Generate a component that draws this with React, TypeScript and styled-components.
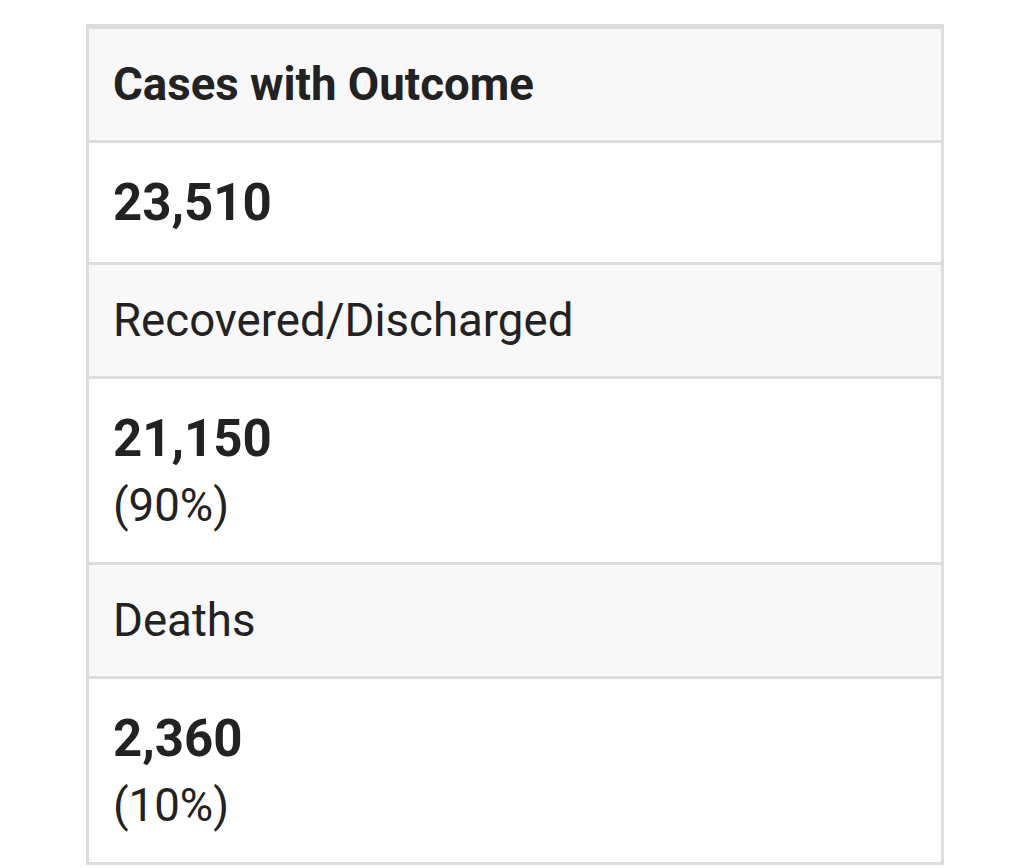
import React from "react";
import styled, { createGlobalStyle } from "styled-components";

const GlobalStyle = createGlobalStyle`
  html, body {
    margin: 0;
    padding: 0;
    background: #ffffff;
  }
  body {
    font-family: Roboto, "Noto Sans", "Liberation Sans", sans-serif;
    color: #222222;
  }
`;

const Page = styled.div`
  padding: 24px 80px 0 86px;
`;

const Table = styled.div`
  display: flex;
  flex-direction: column;
  border: 3px solid #dddddd;
  border-top-width: 5px;
  background: #ffffff;
`;

const Cell = styled.div<{ $shaded?: boolean; $bold?: boolean }>`
  padding: 24px 24px;
  background: ${(p) => (p.$shaded ? "#f8f8f8" : "#ffffff")};
  font-size: 45.6px;
  font-weight: ${(p) => (p.$bold ? 700 : 400)};
  line-height: 63px;
  color: #222222;
  & + & {
    border-top: 3px solid #dddddd;
  }
`;

const Value = styled.div`
  font-size: 51px;
  font-weight: 700;
  line-height: 71px;
`;

const Share = styled.div`
  font-size: 45.6px;
  font-weight: 400;
  line-height: 64px;
`;

type Row = { label: string; value: string; share?: string };

const rows: Row[] = [
  { label: "Recovered/Discharged", value: "21,150", share: "(90%)" },
  { label: "Deaths", value: "2,360", share: "(10%)" },
];

export default function App() {
  return (
    <>
      <GlobalStyle />
      <Page>
        <Table>
          <Cell $shaded $bold>
            Cases with Outcome
          </Cell>
          <Cell>
            <Value>23,510</Value>
          </Cell>
          {rows.map((r) => (
            <React.Fragment key={r.label}>
              <Cell $shaded>{r.label}</Cell>
              <Cell>
                <Value>{r.value}</Value>
                {r.share && <Share>{r.share}</Share>}
              </Cell>
            </React.Fragment>
          ))}
        </Table>
      </Page>
    </>
  );
}
